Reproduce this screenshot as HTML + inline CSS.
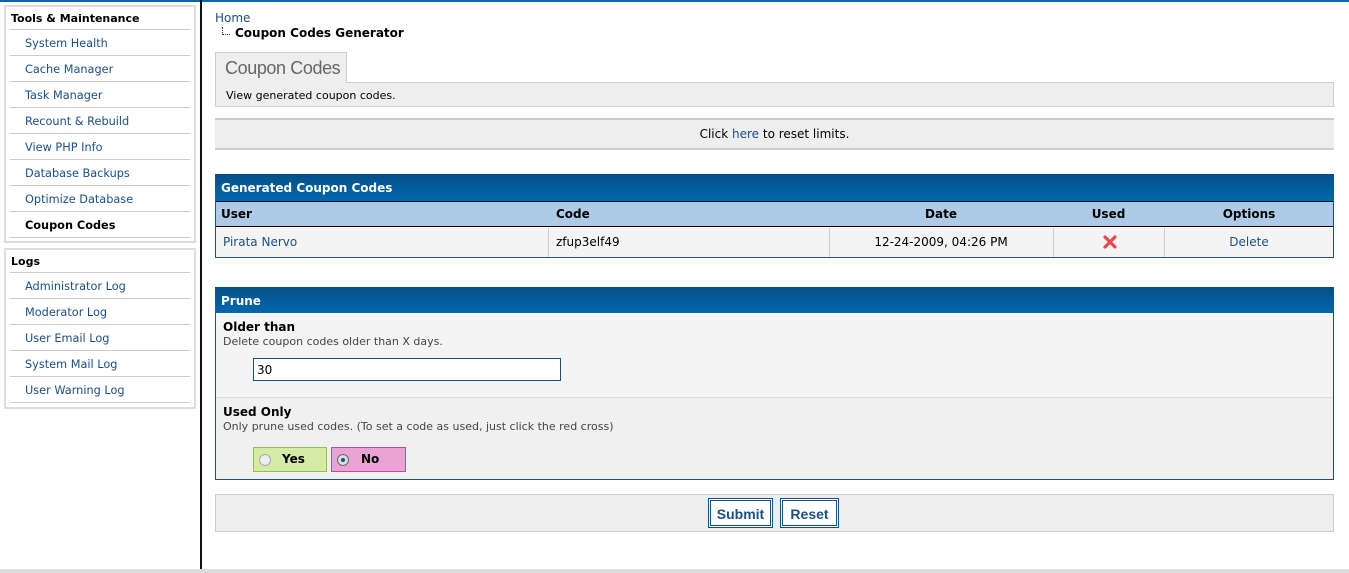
<!DOCTYPE html>
<html><head><meta charset="utf-8"><style>
*{margin:0;padding:0;box-sizing:border-box}
body{width:1349px;height:573px;position:relative;background:#fff;font-family:"DejaVu Sans","Liberation Sans",sans-serif;font-size:11px;color:#000;overflow:hidden}
.a{position:absolute}
a{color:#1a4f8b;text-decoration:none}
.box{position:absolute;left:4px;width:192px;border:2px solid #ddd;background:#fff}
.hd{position:absolute;left:11px;font-weight:bold;font-size:11px}
.ln{position:absolute;left:10px;width:180px;height:1px;background:#ccc}
.it{position:absolute;left:25px;font-size:11.3px;color:#1a4f8b}
.bh{position:absolute;left:215px;width:1119px;height:27px;background:linear-gradient(#055088,#0068ad);color:#fff;font-weight:bold;font-size:12px;padding:7px 0 0 6px}
.c{position:absolute;font-size:12px}
</style></head><body>
<div class="a" style="left:0;top:0;width:1349px;height:2px;background:#0a66aa"></div>
<div class="a" style="left:200px;top:0;width:2px;height:571px;background:#111"></div>
<div class="a" style="left:0;top:569px;width:1349px;height:4px;background:#ddd"></div>

<div class="box" style="top:5px;height:238px"></div>
<div class="hd" style="top:12px">Tools &amp; Maintenance</div>
<div class="ln" style="top:29px"></div>
<div class="it" style="top:37px">System Health</div><div class="ln" style="top:55px"></div>
<div class="it" style="top:63px">Cache Manager</div><div class="ln" style="top:81px"></div>
<div class="it" style="top:89px">Task Manager</div><div class="ln" style="top:107px"></div>
<div class="it" style="top:115px">Recount &amp; Rebuild</div><div class="ln" style="top:133px"></div>
<div class="it" style="top:141px">View PHP Info</div><div class="ln" style="top:159px"></div>
<div class="it" style="top:167px">Database Backups</div><div class="ln" style="top:185px"></div>
<div class="it" style="top:193px">Optimize Database</div><div class="ln" style="top:211px"></div>
<div class="it" style="top:219px;color:#000;font-weight:bold">Coupon Codes</div><div class="ln" style="top:237px"></div>

<div class="box" style="top:248px;height:161px"></div>
<div class="hd" style="top:255px">Logs</div>
<div class="ln" style="top:272px"></div>
<div class="it" style="top:280px">Administrator Log</div><div class="ln" style="top:298px"></div>
<div class="it" style="top:306px">Moderator Log</div><div class="ln" style="top:324px"></div>
<div class="it" style="top:332px">User Email Log</div><div class="ln" style="top:350px"></div>
<div class="it" style="top:358px">System Mail Log</div><div class="ln" style="top:376px"></div>
<div class="it" style="top:384px">User Warning Log</div><div class="ln" style="top:402px"></div>

<div class="a" style="left:215px;top:11px;font-size:12px"><a href="#">Home</a></div>
<div class="a" style="left:222px;top:27px;width:1px;height:8px;border-left:1px dotted #333"></div>
<div class="a" style="left:222px;top:34px;width:8px;border-top:1px dotted #333"></div>
<div class="a" style="left:235px;top:26px;font-size:12px;font-weight:bold">Coupon Codes Generator</div>

<div class="a" style="left:215px;top:52px;width:132px;height:31px;background:#eee;border:1px solid #ccc;border-bottom:none;z-index:2;font-family:'Liberation Sans',sans-serif;font-size:18px;color:#666;padding:5px 0 0 9px;letter-spacing:-0.4px">Coupon Codes</div>
<div class="a" style="left:215px;top:82px;width:1119px;height:25px;background:#eee;border:1px solid #ccc;padding:6px 0 0 10px">View generated coupon codes.</div>

<div class="a" style="left:215px;top:118px;width:1119px;height:32px;background:#eee;border-top:2px solid #ccc;border-bottom:2px solid #ccc;text-align:center;padding-top:7px;font-size:12px">Click <a href="#">here</a> to reset limits.</div>

<div class="bh" style="top:174px">Generated Coupon Codes</div>
<div class="a" style="left:215px;top:201px;width:1119px;height:57px;border:1px solid #1c4f7a;border-top:none"></div>
<div class="a" style="left:216px;top:201px;width:1117px;height:26px;background:#adcbe6;border-top:1px solid #000;border-bottom:1px solid #000"></div>
<div class="a" style="left:216px;top:228px;width:1117px;height:29px;background:#f4f4f4"></div>
<div class="a" style="left:548px;top:228px;width:1px;height:29px;background:#ccc"></div>
<div class="a" style="left:829px;top:228px;width:1px;height:29px;background:#ccc"></div>
<div class="a" style="left:1053px;top:228px;width:1px;height:29px;background:#ccc"></div>
<div class="a" style="left:1164px;top:228px;width:1px;height:29px;background:#ccc"></div>
<div class="c" style="left:221px;top:207px;font-weight:bold">User</div>
<div class="c" style="left:556px;top:207px;font-weight:bold">Code</div>
<div class="c" style="left:829px;width:224px;text-align:center;top:207px;font-weight:bold">Date</div>
<div class="c" style="left:1053px;width:111px;text-align:center;top:207px;font-weight:bold">Used</div>
<div class="c" style="left:1164px;width:170px;text-align:center;top:207px;font-weight:bold">Options</div>
<div class="c" style="left:223px;top:235px"><a href="#">Pirata Nervo</a></div>
<div class="c" style="left:556px;top:235px">zfup3elf49</div>
<div class="c" style="left:829px;width:224px;text-align:center;top:235px">12-24-2009, 04:26 PM</div>
<svg class="a" style="left:1103px;top:235px" width="14" height="14" viewBox="0 0 14 14"><path d="M2 2L12 12M12 2L2 12" stroke="#e8484e" stroke-width="3.2" stroke-linecap="round"/></svg>
<div class="c" style="left:1164px;width:170px;text-align:center;top:235px"><a href="#">Delete</a></div>

<div class="bh" style="top:287px">Prune</div>
<div class="a" style="left:215px;top:313px;width:1119px;height:167px;border:1px solid #1c4f7a;border-top:none;background:#f4f4f4"></div>
<div class="a" style="left:216px;top:397px;width:1117px;height:82px;background:#f0f0f0;border-top:1px solid #ddd"></div>
<div class="c" style="left:223px;top:320px;font-weight:bold">Older than</div>
<div class="a" style="left:223px;top:335px;color:#444">Delete coupon codes older than X days.</div>
<div class="a" style="left:253px;top:358px;width:308px;height:23px;border:1px solid #1c4f7a;background:#fff;font-size:12px;padding:4px 0 0 3px">30</div>
<div class="c" style="left:223px;top:405px;font-weight:bold">Used Only</div>
<div class="a" style="left:223px;top:420px;color:#444">Only prune used codes. (To set a code as used, just click the red cross)</div>
<div class="a" style="left:253px;top:447px;width:74px;height:25px;background:#d5eaa4;border:1px solid #8cc152"></div>
<div class="a" style="left:331px;top:447px;width:75px;height:25px;background:#eaa3d4;border:1px solid #c64a91"></div>
<div class="a" style="left:259px;top:454px;width:12px;height:12px;border-radius:50%;border:1px solid #aaa;background:#eee"></div>
<div class="a" style="left:337px;top:454px;width:12px;height:12px;border-radius:50%;border:1px solid #666;background:#ddd"><div style="margin:3px;width:4px;height:4px;border-radius:50%;background:#1a4f8b"></div></div>
<div class="c" style="left:282px;top:452px;font-weight:bold">Yes</div>
<div class="c" style="left:361px;top:452px;font-weight:bold">No</div>

<div class="a" style="left:215px;top:494px;width:1119px;height:38px;background:#eee;border:1px solid #ccc"></div>
<div class="a" style="left:708px;top:498px;width:65px;height:30px;border:3px double #1a4f8b;background:#fff;font-family:'Liberation Sans',sans-serif;font-weight:bold;font-size:14px;color:#1a4f8b;text-align:center;padding-top:5px">Submit</div>
<div class="a" style="left:780px;top:498px;width:59px;height:30px;border:3px double #1a4f8b;background:#fff;font-family:'Liberation Sans',sans-serif;font-weight:bold;font-size:14px;color:#1a4f8b;text-align:center;padding-top:5px">Reset</div>
</body></html>
